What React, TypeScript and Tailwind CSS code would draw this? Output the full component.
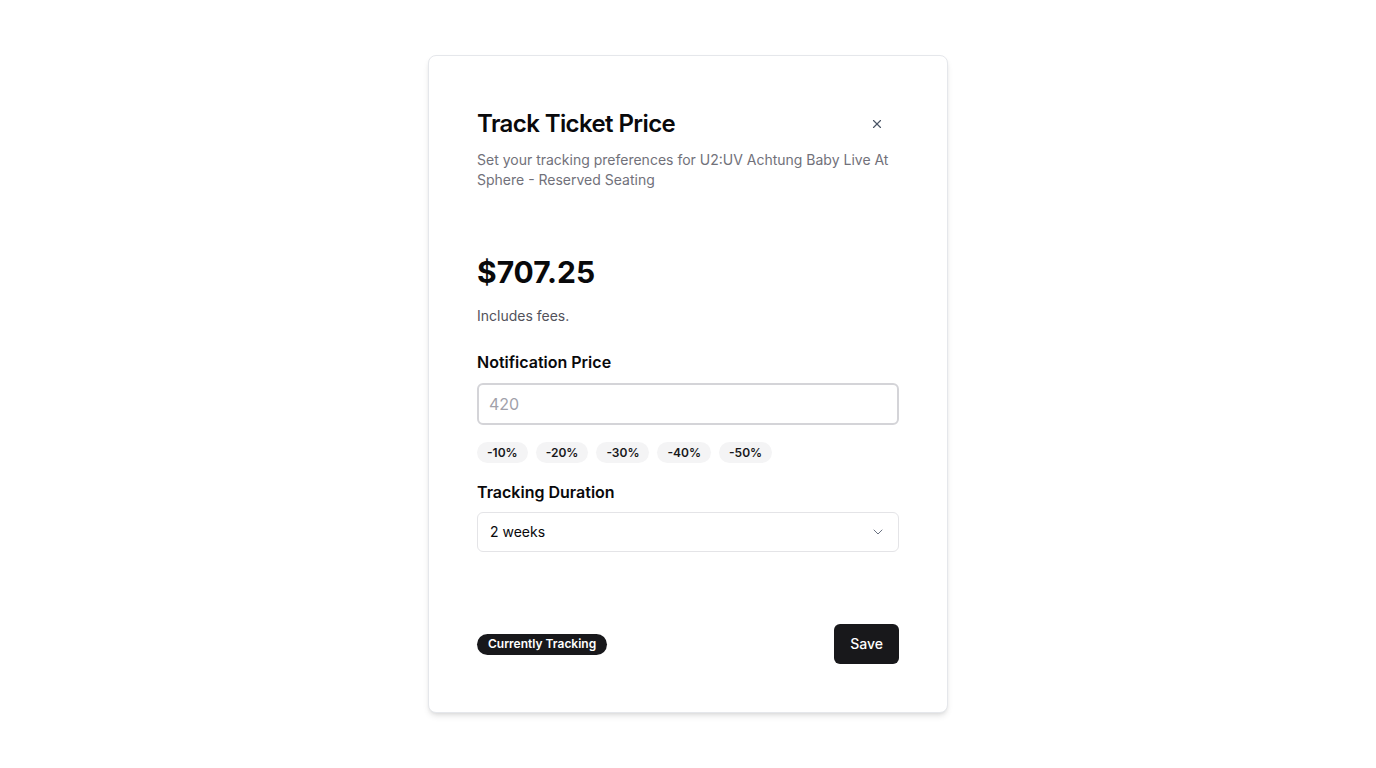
import { ChevronDown, X } from "lucide-react";

const discounts = [ "-10%", "-20%", "-30%", "-40%", "-50%" ];

export default function App()
{
  return (
    <div className="min-h-screen w-full bg-white flex justify-center pt-[55px]" style={{ fontFamily: "Inter, 'Noto Sans', sans-serif" }}>

      <div className="w-[520px] h-[658px] border border-gray-200 rounded-lg bg-white shadow-md px-12 pt-[52px] pb-12 flex flex-col">

        <div className="flex items-start justify-between">
          <h2 className="text-2xl leading-8 font-semibold text-[#09090b] tracking-tight">Track Ticket Price</h2>
          <button className="mt-[9px] mr-[15px] text-gray-600">
            <X className="w-3.5 h-3.5" strokeWidth={ 2 } />
          </button>
        </div>

        <p className="mt-2.5 text-sm leading-5 text-[#71717a] pr-2">
          Set your tracking preferences for U2:UV Achtung Baby Live At Sphere - Reserved Seating
        </p>

        <div className="mt-[64px] text-3xl leading-9 font-bold text-[#09090b]">$707.25</div>

        <p className="mt-4 text-sm leading-5 text-[#52525b]">Includes fees.</p>

        <label className="mt-6 text-base leading-6 font-semibold text-[#09090b]">Notification Price</label>

        <input
          type="text"
          placeholder="420"
          className="mt-[9px] h-[42px] w-full rounded-md border-2 border-[#d4d4d8] px-2.5 text-base text-[#09090b] placeholder:text-[#a1a1aa] outline-none" />

        <div className="mt-[17px] flex gap-2">
          { discounts.map( d => (
            <button key={ d } className="h-[21px] px-2.5 rounded-full bg-[#f4f4f5] text-xs font-semibold text-[#18181b]">
              { d }
            </button>
          ))}
        </div>

        <label className="mt-[17px] text-base leading-6 font-semibold text-[#09090b]">Tracking Duration</label>

        <button className="mt-2 h-10 w-full rounded-md border border-[#e4e4e7] px-3 flex items-center justify-between text-sm text-[#09090b]">
          <span>2 weeks</span>
          <ChevronDown className="w-4 h-4 text-gray-500" strokeWidth={ 1.5 } />
        </button>

        <div className="mt-auto flex items-center justify-between">
          <span className="h-[21px] px-[11px] rounded-full bg-[#18181b] text-white text-xs font-semibold flex items-center">
            Currently Tracking
          </span>
          <button className="h-10 px-4 rounded-md bg-[#18181b] text-white text-sm font-medium">Save</button>
        </div>

      </div>
    </div>
  );
}
